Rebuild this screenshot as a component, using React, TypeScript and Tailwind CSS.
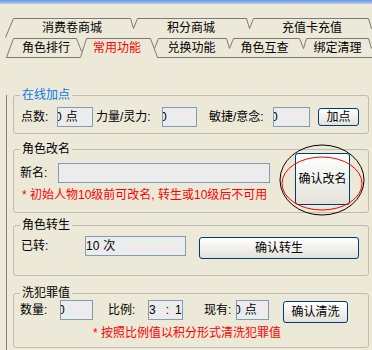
import type { ReactNode } from "react";

const LINE = "#7a7a7a";

type TabProps = {
  label: string;
  box: string;
  points: string;
  bottom?: [number, number];
  active?: boolean;
  pad?: string;
};

function Tab({ label, box, points, bottom, active, pad = "" }: TabProps) {
  return (
    <div className={`relative flex h-[20px] shrink-0 items-center justify-center ${box} ${pad} ${active ? "z-10" : ""}`}>
      <svg className="pointer-events-none absolute inset-0 h-full w-full overflow-visible" fill="none">
        <polyline points={points} stroke={LINE} strokeWidth="1" />
        {bottom && (
          <line x1={bottom[0]} y1="19.5" x2={bottom[1]} y2="19.5" stroke={LINE} strokeWidth="1" />
        )}
      </svg>
      <span className={`relative whitespace-nowrap ${active ? "text-[#ff0000]" : "text-black"}`}>{label}</span>
    </div>
  );
}

function Group({ title, blue, className, children }: { title: string; blue?: boolean; className: string; children: ReactNode }) {
  return (
    <div className={`relative ml-[6px] w-[356px] rounded-[3px] border border-[#bfbcb0] ${className}`}>
      <span
        className={`absolute left-[6px] top-[-8px] bg-[#ece9d8] px-[2px] leading-[14px] ${blue ? "text-[#0a78e6]" : "text-black"}`}
      >
        {title}
      </span>
      {children}
    </div>
  );
}

function Field({ w, children }: { w: string; children?: ReactNode }) {
  return (
    <div className={`flex h-[20px] shrink-0 items-center overflow-hidden whitespace-pre border border-[#7f9db9] bg-[#ececec] ${w}`}>
      {children}
    </div>
  );
}

// the value has scrolled a few pixels left, so only the right half of the "0" shows
function Clipped({ unit }: { unit?: boolean }) {
  return (
    <span className="ml-[-3px]">
      0{unit && <span className="ml-[4px]">点</span>}
    </span>
  );
}

function Btn({ className, children }: { className: string; children: ReactNode }) {
  return (
    <button
      className={`flex shrink-0 items-center justify-center rounded-[3px] border border-[#003c74] bg-linear-to-b from-white to-[#e3e2da] leading-none text-black ${className}`}
    >
      {children}
    </button>
  );
}

export default function App() {
  return (
    <div className="h-[350px] w-[372px] overflow-hidden bg-[#ece9d8] font-['Liberation_Sans','Noto_Sans_CJK_SC',sans-serif] text-[12px] text-black">
      <div className="h-[4px] bg-linear-to-b from-[#6a92de] to-[#b4cdf4]" />

      {/* tab strip, two rows */}
      <div className="mt-[14px] flex pl-[5px]">
        <Tab label="消费卷商城" box="w-[128px]" pad="pl-[6px]" points="0.5,19.5 8.5,0.5 125.5,0.5 128.5,10.5" />
        <Tab label="积分商城" box="w-[116px]" points="0.5,10.5 4.5,0.5 113.5,0.5 116.5,10.5" />
        <Tab label="充值卡充值" box="w-[126px]" points="0.5,10.5 4.5,0.5 119.5,0.5 122.5,10.5" />
      </div>
      <div className="flex pl-[6px]">
        <Tab label="角色排行" box="w-[76px]" pad="pl-[4px]" points="0.5,19.5 7.5,0.5 70.5,0.5 75.5,13.5" bottom={[0, 74]} />
        <Tab label="常用功能" active box="ml-[-2px] w-[78px]" pad="pr-[4px]" points="0.5,19.5 6.5,0.5 70.5,0.5 77.5,19.5" />
        <Tab label="兑换功能" box="ml-[-4px] w-[75px]" points="0.5,10.5 4.5,0.5 72.5,0.5 75.5,10.5" bottom={[3, 75]} />
        <Tab label="角色互查" box="w-[74px]" pad="pr-[3px]" points="0.5,10.5 4.5,0.5 70.5,0.5 74.5,10.5" bottom={[0, 74]} />
        <Tab label="绑定清理" box="w-[69px]" points="0.5,10.5 3.5,0.5 65.5,0.5 68.5,10.5" bottom={[0, 80]} />
      </div>

      {/* page body */}
      <div className="ml-[6px] h-[292px] border-l border-[#808080]">
        <Group title="在线加点" blue className="mt-[37px] h-[39px]">
          <div className="flex items-center pl-[7px] pt-[11px]">
            <span className="w-[36px]">点数:</span>
            <Field w="w-[36px]">
              <Clipped unit />
            </Field>
            <span className="ml-[3px] w-[66px]">力量/灵力:</span>
            <Field w="w-[35px]">
              <Clipped />
            </Field>
            <span className="ml-[12px] w-[64px]">敏捷/意念:</span>
            <Field w="w-[37px]">
              <Clipped />
            </Field>
            <Btn className="ml-[8px] h-[18px] w-[41px]">加点</Btn>
          </div>
        </Group>

        <Group title="角色改名" className="mt-[15px] h-[64px]">
          <div className="flex items-start">
            <div className="pl-[6px] pt-[13px]">
              <div className="flex items-center">
                <span className="w-[38px]">新名:</span>
                <Field w="w-[212px]" />
              </div>
              <p className="ml-[2px] mt-[5px] whitespace-nowrap leading-[14px] text-[#ff0000]">
                * 初始人物10级前可改名, 转生或10级后不可用
              </p>
            </div>
            <Btn className="ml-auto mr-[18px] mt-[3px] h-[52px] w-[55px] rounded-[2px]">确认改名</Btn>
          </div>
          {/* hand-drawn markup circles over the button */}
          <svg className="pointer-events-none absolute left-[264px] top-[-7px] z-20 overflow-visible" width="88" height="74" fill="none">
            <ellipse cx="44" cy="37" rx="42" ry="35" stroke="#000" strokeWidth="1" />
            <ellipse cx="44" cy="40.5" rx="40" ry="26.5" stroke="#ff0000" strokeWidth="1" />
          </svg>
        </Group>

        <Group title="角色转生" className="mt-[12px] h-[51px]">
          <div className="flex items-start pl-[7px] pt-[10px]">
            <span className="w-[64px] leading-[20px]">已转:</span>
            <Field w="w-[101px]">
              <span>10</span>
              <span className="ml-[4px]">次</span>
            </Field>
            <Btn className="ml-[13px] mt-[1px] h-[22px] w-[160px]">确认转生</Btn>
          </div>
        </Group>

        <Group title="洗犯罪值" className="mt-[17px] h-[55px]">
          <div className="flex items-start pl-[6px] pt-[6px]">
            <span className="w-[40px] leading-[20px]">数量:</span>
            <Field w="w-[33px]">
              <Clipped />
            </Field>
            <span className="ml-[15px] w-[40px] leading-[20px]">比例:</span>
            <Field w="w-[35px]">
              <span>3</span>
              <span className="ml-[10px]">:</span>
              <span className="ml-[6px]">1</span>
            </Field>
            <span className="ml-[21px] w-[32px] leading-[20px]">现有:</span>
            <Field w="w-[33px]">
              <Clipped unit />
            </Field>
            <Btn className="ml-[14px] mt-[1px] h-[22px] w-[65px]">确认清洗</Btn>
          </div>
          <p className="mt-[3px] whitespace-nowrap pl-[79px] leading-[14px] text-[#ff0000]">* 按照比例值以积分形式清洗犯罪值</p>
        </Group>
      </div>
    </div>
  );
}
